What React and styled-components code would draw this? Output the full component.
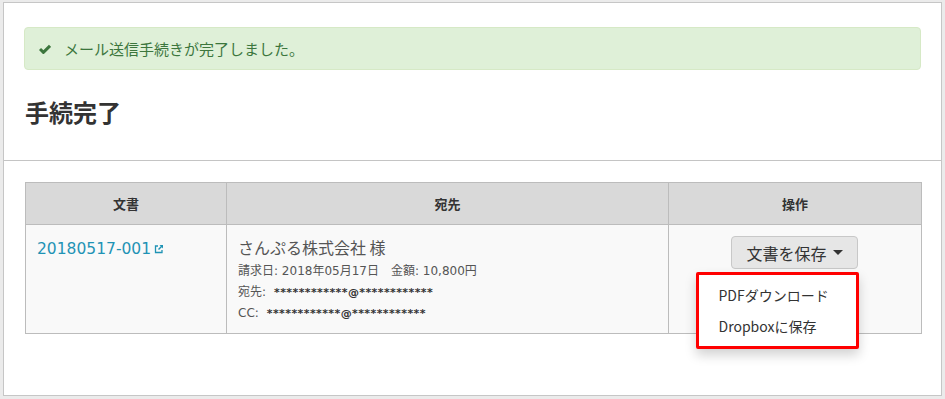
import React from "react";
import styled, { createGlobalStyle } from "styled-components";

const GlobalStyle = createGlobalStyle`
    html, body {
        margin: 0;
        padding: 0;
        background: #ebebeb;
    }
    body {
        font-family: "Noto Sans CJK JP", "Noto Sans", sans-serif;
        color: #333;
    }
    * {
        box-sizing: border-box;
    }
`;

const Panel = styled.div`
    margin: 2px 3px 0 3px;
    height: 394px;
    background: #fff;
    border: 1px solid #c6c6c6;
`;

const TopSection = styled.div`
    padding: 24px 20px 0 20px;
    height: 158px;
    border-bottom: 1px solid #c4c4c4;
`;

const Alert = styled.div`
    display: flex;
    align-items: center;
    gap: 13px;
    height: 43px;
    padding: 0 14px;
    background: #dff0d8;
    border: 1px solid #d6e9c6;
    border-radius: 4px;
    color: #3c763d;
    font-size: 15px;
`;

const Heading = styled.h1`
    margin: 26px 0 0 1px;
    font-size: 24px;
    line-height: 32px;
    font-weight: bold;
    color: #333;
`;

const TableSection = styled.div`
    padding: 21px 20px 0 21px;
`;

const Table = styled.table`
    width: 897px;
    border-collapse: collapse;
    border: 1px solid #bcbcbc;
`;

const Th = styled.th`
    background: #d9d9d9;
    border: 1px solid #bcbcbc;
    padding: 10px 12px;
    line-height: 21px;
    font-size: 13px;
    font-weight: bold;
    color: #333;
    text-align: center;
    width: ${p => p.w};
`;

const Td = styled.td`
    background: #f9f9f9;
    border: 1px solid #bcbcbc;
    padding: 10px 12px 9px 11px;
    vertical-align: top;
    text-align: ${p => (p.center ? "center" : "left")};
`;

const DocLink = styled.a`
    display: inline-flex;
    align-items: center;
    gap: 3px;
    font-family: "DejaVu Sans", sans-serif;
    font-size: 15.5px;
    line-height: 24px;
    color: #1f93b5;
    text-decoration: none;
`;

const Name = styled.div`
    font-size: 16px;
    line-height: 24px;
    color: #555;
`;

const Detail = styled.div`
    font-family: "DejaVu Sans", "Noto Sans CJK JP", sans-serif;
    font-size: 12px;
    line-height: 21px;
    color: #555;
    margin-top: ${p => (p.first ? "2px" : "0")};
`;

const Masked = styled.span`
    margin-left: 8px;
    color: #333;
    font-weight: bold;
    font-size: 11px;
    letter-spacing: 0.4px;
`;

const ActionWrap = styled.div`
    position: relative;
    display: inline-block;
    margin-top: 1px;
`;

const SaveButton = styled.button`
    display: inline-flex;
    align-items: center;
    gap: 6px;
    height: 33px;
    padding: 0 14px;
    background: #e6e6e6;
    border: 1px solid #c8c8c8;
    border-radius: 4px;
    font-family: inherit;
    font-size: 16px;
    color: #333;
`;

const Caret = styled.span`
    width: 0;
    height: 0;
    border-left: 5px solid transparent;
    border-right: 5px solid transparent;
    border-top: 5px solid #333;
`;

const Menu = styled.ul`
    position: absolute;
    top: 36px;
    right: -1px;
    width: 163px;
    margin: 0;
    padding: 5px 0 4px 0;
    list-style: none;
    background: #fff;
    border: 3px solid #ff0000;
    border-radius: 2px;
    box-shadow: 0 6px 12px rgba(0, 0, 0, 0.18);
    text-align: left;
`;

const MenuItem = styled.li`
    padding: 0 20px;
    font-size: 14px;
    line-height: 31px;
    color: #333;
`;

const CheckIcon = () => (
    <svg width="12" height="10" viewBox="0 0 12 10">
        <path d="M1 5 L4.4 8.4 L11 1.8" fill="none" stroke="#3c763d" strokeWidth="3" />
    </svg>
);

const ExternalIcon = () => (
    <svg width="10" height="10" viewBox="0 0 10 10">
        <path d="M4 2 H1.5 V8.5 H8 V6" fill="none" stroke="#1f93b5" strokeWidth="1.3" />
        <path d="M5.5 1 H9 V4.5 Z" fill="#1f93b5" />
        <path d="M8.5 1.5 L4.5 5.5" stroke="#1f93b5" strokeWidth="1.5" />
    </svg>
);

const App = () => {
    return (
        <>
            <GlobalStyle />
            <Panel>
                <TopSection>
                    <Alert>
                        <CheckIcon />
                        <span>メール送信手続きが完了しました。</span>
                    </Alert>
                    <Heading>手続完了</Heading>
                </TopSection>
                <TableSection>
                    <Table>
                        <thead>
                            <tr>
                                <Th w="201px">文書</Th>
                                <Th w="442px">宛先</Th>
                                <Th>操作</Th>
                            </tr>
                        </thead>
                        <tbody>
                            <tr>
                                <Td>
                                    <DocLink href="#">
                                        20180517-001
                                        <ExternalIcon />
                                    </DocLink>
                                </Td>
                                <Td>
                                    <Name>さんぷる株式会社 様</Name>
                                    <Detail first>請求日: 2018年05月17日　金額: 10,800円</Detail>
                                    <Detail>宛先:<Masked>************@************</Masked></Detail>
                                    <Detail>CC:<Masked>************@************</Masked></Detail>
                                </Td>
                                <Td center>
                                    <ActionWrap>
                                        <SaveButton>
                                            文書を保存
                                            <Caret />
                                        </SaveButton>
                                        <Menu>
                                            <MenuItem>PDFダウンロード</MenuItem>
                                            <MenuItem>Dropboxに保存</MenuItem>
                                        </Menu>
                                    </ActionWrap>
                                </Td>
                            </tr>
                        </tbody>
                    </Table>
                </TableSection>
            </Panel>
        </>
    );
};

export default App;
